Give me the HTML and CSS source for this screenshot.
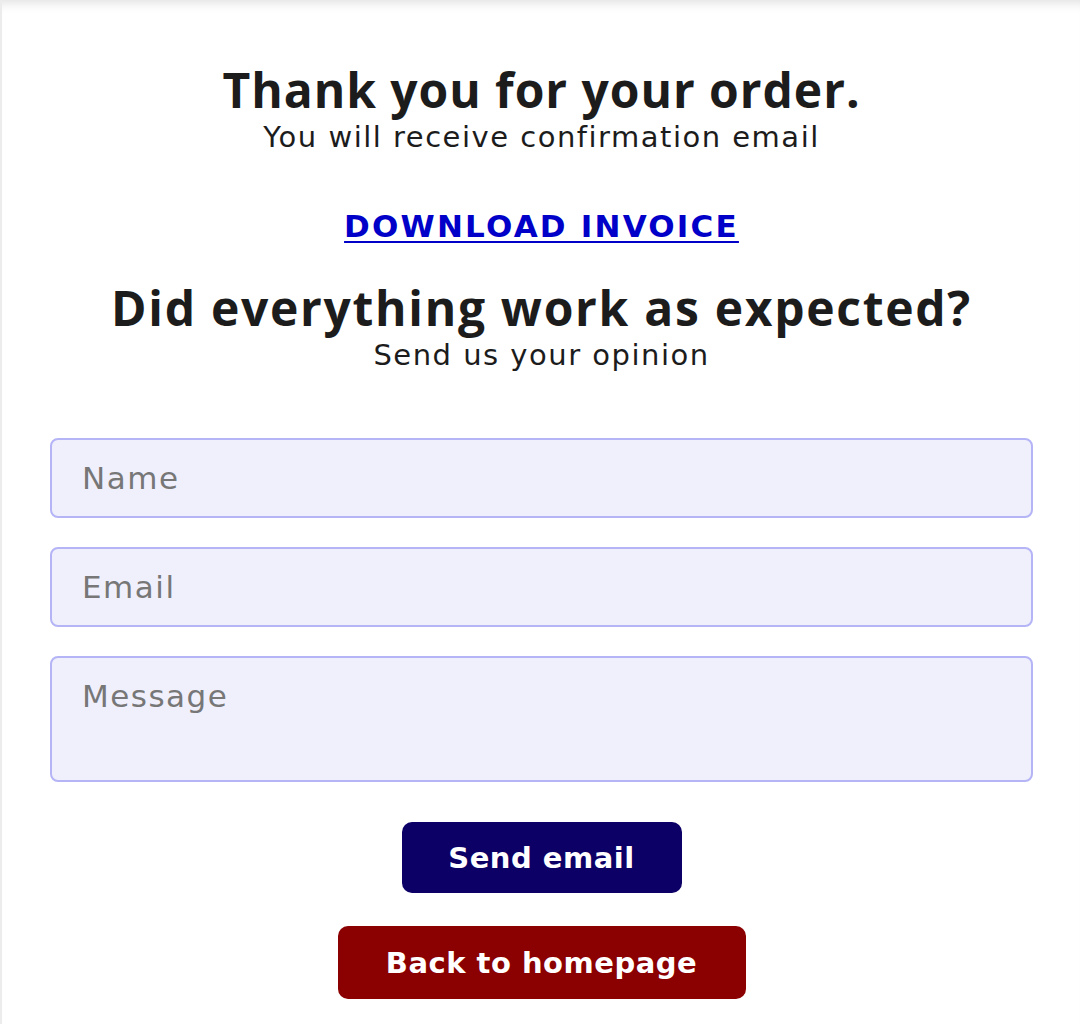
FILE: index.html
```html
<!DOCTYPE html>
<html lang="en">
<head>
<meta charset="utf-8">
<title>Thank you</title>
<link rel="stylesheet" href="styles.css">
</head>
<body>
<main class="page">
  <h1 class="title">Thank you for your order.</h1>
  <p class="subtitle">You will receive confirmation email</p>
  <a class="invoice" href="#">DOWNLOAD INVOICE</a>
  <h2 class="title title-second">Did everything work as expected?</h2>
  <p class="subtitle subtitle-second">Send us your opinion</p>
  <form class="form">
    <input class="field" type="text" placeholder="Name">
    <input class="field" type="email" placeholder="Email">
    <textarea class="field field-area" placeholder="Message"></textarea>
    <button class="btn btn-send" type="button">Send email</button>
    <button class="btn btn-back" type="button">Back to homepage</button>
  </form>
</main>
</body>
</html>
```

FILE: styles.css
```css
html, body {
  margin: 0;
  padding: 0;
  background: #ffffff;
}

body {
  font-family: "DejaVu Sans", "Open Sans", sans-serif;
  color: #1c1c1c;
}

.page {
  min-height: 1024px;
  box-sizing: border-box;
  border-left: 2px solid #ececec;
  box-shadow: inset 0 12px 12px -10px rgba(0, 0, 0, 0.14);
  padding: 62px 47px 0 48px;
  display: flex;
  flex-direction: column;
  align-items: center;
  text-align: center;
}

.title {
  margin: 0;
  font-family: "Open Sans", "DejaVu Sans", sans-serif;
  font-size: 48px;
  line-height: 56px;
  font-weight: 700;
  color: #1c1c1c;
  letter-spacing: 0.95px;
}

.title-second {
  margin-top: 34px;
  letter-spacing: 1.7px;
}

.subtitle {
  margin: 0;
  font-size: 29px;
  line-height: 38px;
  font-weight: 400;
  color: #1c1c1c;
  letter-spacing: 1.5px;
}

.invoice {
  margin-top: 50px;
  font-size: 31px;
  line-height: 40px;
  font-weight: 700;
  color: #0000c8;
  letter-spacing: 2.2px;
  text-decoration: underline;
  text-decoration-thickness: 2px;
  text-underline-offset: 4px;
}

.form {
  align-self: stretch;
  margin-top: 64px;
  display: flex;
  flex-direction: column;
  align-items: center;
}

.field {
  display: block;
  width: 100%;
  box-sizing: border-box;
  height: 80px;
  margin: 0 0 29px 0;
  padding: 0 30px;
  border: 2px solid #b4b4f6;
  border-radius: 8px;
  background: #f0f0fc;
  font-family: inherit;
  font-size: 31px;
  font-weight: 400;
  letter-spacing: 1.5px;
  color: #333;
  outline: none;
}

.field::placeholder {
  color: #777777;
}

.field-area {
  height: 126px;
  padding-top: 20px;
  resize: none;
  margin-bottom: 40px;
}

.btn {
  border: none;
  font-family: inherit;
  font-weight: 700;
  font-size: 29px;
  letter-spacing: 0.5px;
  color: #ffffff;
  border-radius: 10px;
  cursor: pointer;
}

.btn-send {
  width: 280px;
  height: 71px;
  background: #0c0066;
}

.btn-back {
  margin-top: 33px;
  width: 408px;
  height: 73px;
  background: #8b0000;
}
```
